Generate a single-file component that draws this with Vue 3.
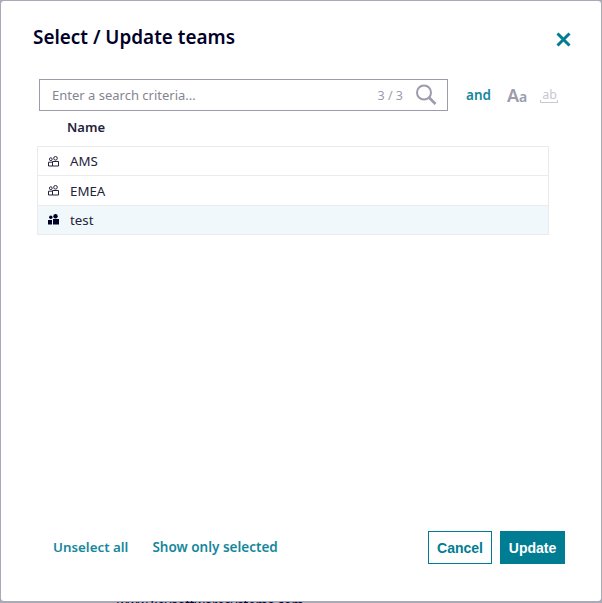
<script setup>
const teams = [
  { name: "AMS", selected: false },
  { name: "EMEA", selected: false },
  { name: "test", selected: true },
];
</script>

<template>
  <div class="backdrop">
    <div class="dialog">
      <header class="head">
        <h1>Select / Update teams</h1>
        <button class="close" aria-label="Close">
          <svg width="15" height="15" viewBox="0 0 15 15">
            <path d="M1.5 1.5 13.5 13.5M13.5 1.5 1.5 13.5" stroke="#007d92" stroke-width="3" fill="none" />
          </svg>
        </button>
      </header>

      <div class="search-row">
        <div class="search">
          <span class="placeholder">Enter a search criteria...</span>
          <span class="count">3 / 3</span>
          <svg class="lens" width="22" height="22" viewBox="0 0 22 22" fill="none" stroke="#9c9cad">
            <circle cx="9" cy="8.5" r="7" stroke-width="2" />
            <path d="M14 13.5 20.5 20" stroke-width="2.6" />
          </svg>
        </div>
        <span class="and">and</span>
        <span class="case"><b>A</b>a</span>
        <span class="word">ab</span>
      </div>

      <div class="col-title">Name</div>

      <ul class="list">
        <li v-for="team in teams" :key="team.name" :class="{ selected: team.selected }">
          <svg v-if="!team.selected" width="11" height="11" viewBox="0 0 11 11" fill="none" stroke="#23233c" stroke-width="1">
            <circle cx="2.8" cy="3.2" r="1.4" />
            <circle cx="7.5" cy="2.3" r="1.8" />
            <path d="M.5 10V6.2h4V10ZM4.5 10V5.5h6V10Z" />
          </svg>
          <svg v-else width="11" height="11" viewBox="0 0 11 11" fill="#000028">
            <circle cx="2.8" cy="3.2" r="1.7" />
            <circle cx="7.5" cy="2.2" r="2.2" />
            <path d="M0 10.5V6h4v4.5ZM5 10.5V5h6v5.5Z" />
          </svg>
          <span>{{ team.name }}</span>
        </li>
      </ul>

      <footer class="foot">
        <a class="link first">Unselect all</a>
        <a class="link">Show only selected</a>
        <button class="btn cancel">Cancel</button>
        <button class="btn update">Update</button>
      </footer>
    </div>
    <div class="behind">www.keysoftwaresystems.com</div>
  </div>
</template>

<style>
html, body {
  margin: 0;
  background: #a9a9b8;
}
</style>

<style scoped>
.backdrop {
  height: 603px;
  padding: 1px 1px 0;
  box-sizing: border-box;
  overflow: hidden;
  font-family: "Noto Sans", "Open Sans", sans-serif;
  color: #000028;
}
.dialog {
  height: 600px;
  background: #fff;
  border-radius: 3px;
  display: flex;
  flex-direction: column;
  padding: 0 30px 0 36px;
  box-sizing: border-box;
}
.head {
  display: flex;
  justify-content: space-between;
  align-items: center;
  height: 72px;
  margin-left: -4px;
}
h1 {
  margin: 0;
  font-size: 18.9px;
  font-weight: 600;
}
.close {
  border: 0;
  background: none;
  padding: 0;
  display: flex;
  margin-top: 4px;
}
.search-row {
  display: flex;
  align-items: center;
  margin-top: 6px;
  margin-left: 2px;
}
.search {
  width: 409px;
  height: 32px;
  box-sizing: border-box;
  border: 1px solid #9c9cad;
  display: flex;
  align-items: center;
  padding: 0 10px 0 12px;
  font-size: 13px;
}
.placeholder {
  flex: 1;
  color: #85858f;
}
.count {
  color: #9c9cad;
  font-size: 12.5px;
  margin-right: 12px;
}
.and {
  margin-left: 18px;
  color: #15879b;
  font-size: 13.5px;
  font-weight: 600;
}
.case {
  margin-left: 16px;
  color: #9c9cad;
  font-size: 14px;
  font-weight: 600;
}
.case b {
  font-size: 18px;
  font-weight: 600;
}
.word {
  position: relative;
  margin-left: 15px;
  color: #c8c8d0;
  font-size: 12.5px;
  line-height: 12px;
}
.word::after {
  content: "";
  position: absolute;
  left: -2px;
  right: -1px;
  bottom: -2px;
  height: 2px;
  border: 1px solid #c8c8d0;
  border-top: 0;
}
.col-title {
  margin: 7px 0 0 30px;
  font-size: 13px;
  font-weight: 600;
  color: #23233c;
  line-height: 18px;
}
.list {
  list-style: none;
  margin: 10px 0 0;
  padding: 0;
  width: 512px;
  border: 1px solid #ebebee;
  border-bottom: 0;
  box-sizing: border-box;
}
.list li {
  height: 29.4px;
  box-sizing: border-box;
  border-bottom: 1px solid #ebebee;
  display: flex;
  align-items: center;
  gap: 11px;
  padding-left: 10px;
  font-size: 13.3px;
  color: #23233c;
}
.list li.selected {
  background: #f1f8fb;
}
.foot {
  margin-top: auto;
  margin-bottom: 37px;
  display: flex;
  align-items: center;
  padding-left: 16px;
  padding-right: 6px;
}
.link {
  color: #15879b;
  font-size: 13.5px;
  font-weight: 600;
  margin-right: 23px;
  margin-top: -1px;
}
.link.first {
  font-size: 13.35px;
  margin-right: 24px;
}
.btn {
  height: 33px;
  box-sizing: border-box;
  font-family: "Liberation Sans", Arial, sans-serif;
  font-size: 14px;
  font-weight: 700;
  border: 1px solid #007d92;
  border-radius: 0;
  padding: 0;
}
.cancel {
  margin-left: auto;
  width: 64px;
  background: #fff;
  color: #007d92;
}
.update {
  margin-left: 8px;
  width: 65px;
  background: #007d92;
  color: #fff;
}
.behind {
  margin-left: 116px;
  height: 2px;
  overflow: hidden;
  font-size: 13px;
  line-height: 6px;
  color: #000028;
}
</style>
